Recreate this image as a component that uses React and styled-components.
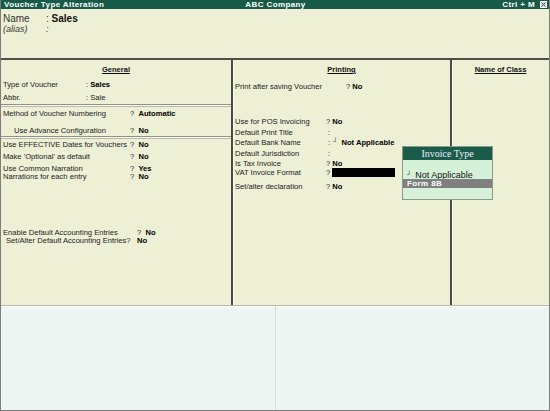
import styled, { createGlobalStyle } from "styled-components";

const GlobalStyle = createGlobalStyle`
  html, body { margin: 0; padding: 0; background: #fff; }
  body { font-family: "Liberation Sans", Arial, sans-serif; }
`;

const Screen = styled.div`
  position: relative;
  width: 550px;
  height: 411px;
  display: flex;
  flex-direction: column;
  box-sizing: border-box;
  border: 1px solid #7c7c7c;
  border-top: none;
  background: #eef0d6;
  overflow: hidden;
  color: #111;
`;

const TitleBar = styled.div`
  height: 9px;
  flex: none;
  background: #185a48;
  color: #fff;
  font-weight: bold;
  font-size: 8px;
  letter-spacing: 0.4px;
  line-height: 9px;
  display: grid;
  grid-template-columns: 1fr auto 1fr;
  padding: 0 2px 0 3px;
  .right {
    display: flex;
    justify-content: flex-end;
    align-items: center;
    gap: 5px;
  }
`;

const CloseBox = styled.span`
  width: 7px;
  height: 7px;
  background: #d8d8d8;
  border: 1px solid #fff;
  box-sizing: border-box;
  display: flex;
  align-items: center;
  justify-content: center;
  svg { display: block; }
`;

const NameArea = styled.div`
  height: 51px;
  flex: none;
  padding: 4px 0 0 2px;
  box-sizing: border-box;
  border-bottom: 2px solid #4e5048;
  font-size: 10px;
`;

const NameRow = styled.div`
  display: flex;
  height: ${(p) => p.$h || 11}px;
  line-height: ${(p) => p.$h || 11}px;
  font-style: ${(p) => (p.$italic ? "italic" : "normal")};
  font-size: ${(p) => (p.$italic ? 9 : 10)}px;
  color: #333;
  .label { width: 43px; }
  .value { font-weight: bold; font-style: normal; color: #111; }
`;

const Columns = styled.div`
  height: 245px;
  flex: none;
  display: grid;
  grid-template-columns: 232px 219px 1fr;
`;

const Column = styled.div`
  position: relative;
  display: flex;
  flex-direction: column;
  padding-top: 5px;
  font-size: 7.6px;
  border-right: ${(p) => (p.$divider ? "2px solid #4a4c44" : "none")};
  box-shadow: ${(p) => (p.$divider ? "1px 0 0 #fbfbef" : "none")};
`;

const Heading = styled.div`
  height: 10px;
  line-height: 10px;
  text-align: center;
  font-weight: bold;
  font-size: 7.5px;
  span { text-decoration: underline; text-underline-offset: 1px; }
`;

const Row = styled.div`
  display: flex;
  align-items: center;
  height: ${(p) => p.$h || 10}px;
  margin-top: ${(p) => p.$mt || 0}px;
  padding-left: ${(p) => p.$indent || 2}px;
  white-space: nowrap;
  color: #1a1a1a;
  .label { width: ${(p) => p.$lw}px; flex: none; }
  b { font-weight: bold; color: #000; }
`;

const Separator = styled.div`
  height: 1px;
  margin-top: ${(p) => p.$mt || 0}px;
  border-top: 1px solid #8f9184;
  border-bottom: 1px solid #b6b8a8;
  background: #fbfbf2;
`;

const Mask = styled.span`
  display: inline-block;
  width: 63px;
  height: 9px;
  background: #000;
  margin-left: 2px;
`;

const Glyph = styled.span`
  font-size: 6px;
  vertical-align: 2px;
  margin: 0 4px 0 3px;
  font-weight: bold;
`;

const Lower = styled.div`
  flex: 1;
  display: grid;
  grid-template-columns: 274px 1fr;
  background: #edf6f3;
  border-top: 1px solid #b9bbaa;
  box-shadow: inset 0 1px 0 #fdfdf8;
  div + div { border-left: 1px solid #dadcd8; }
`;

const Popup = styled.div`
  position: absolute;
  left: 401px;
  top: 146px;
  width: 91px;
  height: 54px;
  box-sizing: border-box;
  border: 1px solid #8c9a8c;
  background: #d5f1d8;
  display: flex;
  flex-direction: column;
  .head {
    height: 13px;
    line-height: 13px;
    background: #1b5b4a;
    color: #eef;
    text-align: center;
    font-family: "Liberation Serif", "Times New Roman", serif;
    font-size: 10px;
  }
`;

const PopItem = styled.div`
  height: ${(p) => p.$h || 9}px;
  line-height: ${(p) => p.$h || 9}px;
  margin-top: ${(p) => p.$mt || 0}px;
  padding-left: 4px;
  font-size: ${(p) => (p.$active ? 8 : 9)}px;
  font-weight: ${(p) => (p.$active ? "bold" : "normal")};
  background: ${(p) => (p.$active ? "#808080" : "transparent")};
  color: ${(p) => (p.$active ? "#fff" : "#111")};
  letter-spacing: ${(p) => (p.$active ? "0.4px" : "0")};
`;

export default function App() {
  return (
    <>
      <GlobalStyle />
      <Screen>
        <TitleBar>
          <span>Voucher Type Alteration</span>
          <span>ABC Company</span>
          <span className="right">
            <span>Ctrl + M</span>
            <CloseBox>
              <svg width="5" height="5" viewBox="0 0 5 5">
                <path d="M0.5 0.5L4.5 4.5M4.5 0.5L0.5 4.5" stroke="#555" strokeWidth="1" />
              </svg>
            </CloseBox>
          </span>
        </TitleBar>

        <NameArea>
          <NameRow>
            <span className="label">Name</span>
            <span>:&nbsp;</span>
            <span className="value">Sales</span>
          </NameRow>
          <NameRow $italic>
            <span className="label">(alias)</span>
            <span>:</span>
          </NameRow>
        </NameArea>

        <Columns>
          <Column $divider>
            <Heading><span>General</span></Heading>
            <Row $mt={4} $lw={83}>
              <span className="label">Type of Voucher</span>
              <span>:&nbsp;<b>Sales</b></span>
            </Row>
            <Row $mt={3} $lw={83}>
              <span className="label">Abbr.</span>
              <span>: Sale</span>
            </Row>
            <Separator $mt={2} />
            <Row $mt={1} $lw={127}>
              <span className="label">Method of Voucher Numbering</span>
              <span>?&nbsp;&nbsp;<b>Automatic</b></span>
            </Row>
            <Row $mt={7} $lw={116} $indent={13}>
              <span className="label">Use Advance Configuration</span>
              <span>?&nbsp;&nbsp;<b>No</b></span>
            </Row>
            <Separator $mt={1} />
            <Row $mt={0} $lw={127}>
              <span className="label">Use EFFECTIVE Dates for Vouchers</span>
              <span>?&nbsp;&nbsp;<b>No</b></span>
            </Row>
            <Row $mt={2} $lw={127}>
              <span className="label">Make 'Optional' as default</span>
              <span>?&nbsp;&nbsp;<b>No</b></span>
            </Row>
            <Row $mt={3} $h={8} $lw={127}>
              <span className="label">Use Common Narration</span>
              <span>?&nbsp;&nbsp;<b>Yes</b></span>
            </Row>
            <Row $h={8} $lw={127}>
              <span className="label">Narrations for each entry</span>
              <span>?&nbsp;&nbsp;<b>No</b></span>
            </Row>
            <Row $mt={48} $h={8} $lw={134}>
              <span className="label">Enable Default Accounting Entries</span>
              <span>?&nbsp;&nbsp;<b>No</b></span>
            </Row>
            <Row $h={8} $lw={131} $indent={5}>
              <span className="label">Set/Alter Default Accounting Entries?</span>
              <span><b>No</b></span>
            </Row>
          </Column>

          <Column $divider>
            <Heading><span>Printing</span></Heading>
            <Row $mt={6} $lw={111}>
              <span className="label">Print after saving Voucher</span>
              <span>?&nbsp;<b>No</b></span>
            </Row>
            <Row $mt={25} $lw={91}>
              <span className="label">Use for POS Invoicing</span>
              <span>?&nbsp;<b>No</b></span>
            </Row>
            <Row $mt={1} $lw={91}>
              <span className="label">Default Print Title</span>
              <span>&nbsp;:</span>
            </Row>
            <Row $lw={91}>
              <span className="label">Default Bank Name</span>
              <span>&nbsp;:<Glyph>┘</Glyph><b>Not Applicable</b></span>
            </Row>
            <Row $mt={1} $lw={91}>
              <span className="label">Default Jurisdiction</span>
              <span>&nbsp;:</span>
            </Row>
            <Row $h={10} $lw={91}>
              <span className="label">Is Tax Invoice</span>
              <span>?&nbsp;<b>No</b></span>
            </Row>
            <Row $h={9} $lw={91}>
              <span className="label">VAT Invoice Format</span>
              <span>?</span>
              <Mask />
            </Row>
            <Row $mt={4} $lw={91}>
              <span className="label">Set/alter declaration</span>
              <span>?&nbsp;<b>No</b></span>
            </Row>
          </Column>

          <Column>
            <Heading><span>Name of Class</span></Heading>
          </Column>
        </Columns>

        <Lower>
          <div />
          <div />
        </Lower>

        <Popup>
          <div className="head">Invoice Type</div>
          <PopItem $mt={10} $h={9}>
            <Glyph style={{ margin: "0 4px 0 0" }}>┘</Glyph>Not Applicable
          </PopItem>
          <PopItem $active>Form 8B</PopItem>
        </Popup>
      </Screen>
    </>
  );
}
